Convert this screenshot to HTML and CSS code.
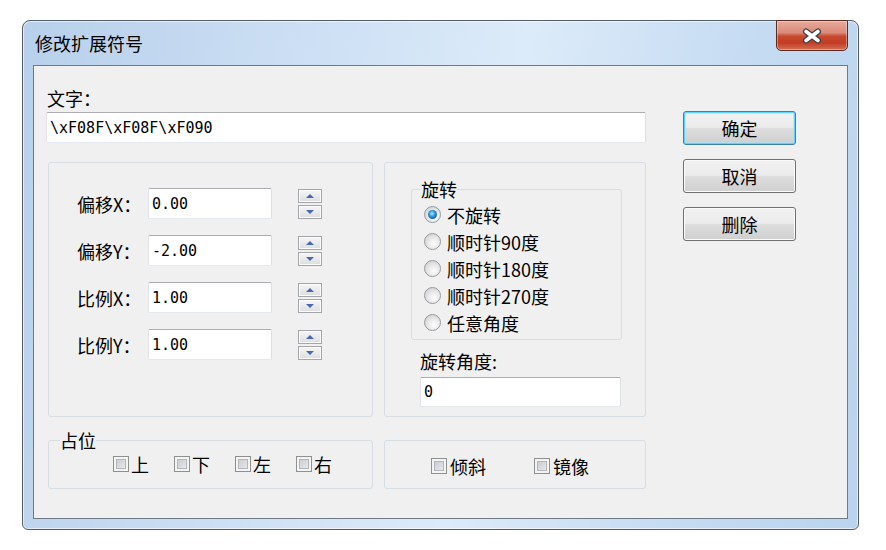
FILE: index.html
```html
<!DOCTYPE html>
<html lang="zh-CN">
<head>
    <meta charset="UTF-8">
    <title>修改扩展符号</title>
    <link rel="stylesheet" href="styles.css">
</head>
<body>
    <div class="window">
        <div class="titlebar">
            <span class="title">修改扩展符号</span>
            <button class="close-btn" type="button">
                <svg width="22" height="16" viewBox="0 0 22 16">
                    <path d="M5 3.5 L17 12.5 M17 3.5 L5 12.5" stroke="#3b4148" stroke-width="6" stroke-linecap="round"/>
                    <path d="M5 3.5 L17 12.5 M17 3.5 L5 12.5" stroke="#ffffff" stroke-width="3.6" stroke-linecap="round"/>
                </svg>
            </button>
        </div>
        <div class="client">
            <div class="main">
                <div class="text-label">文字：</div>
                <input class="field field-wide" type="text" value="\xF08F\xF08F\xF090">

                <div class="groups">
                    <div class="group offsets">
                        <label>偏移X：</label>
                        <input class="field field-num" type="text" value="0.00">
                        <div class="spin"><span class="spin-up"></span><span class="spin-down"></span></div>

                        <label>偏移Y：</label>
                        <input class="field field-num" type="text" value="-2.00">
                        <div class="spin"><span class="spin-up"></span><span class="spin-down"></span></div>

                        <label>比例X：</label>
                        <input class="field field-num" type="text" value="1.00">
                        <div class="spin"><span class="spin-up"></span><span class="spin-down"></span></div>

                        <label>比例Y：</label>
                        <input class="field field-num" type="text" value="1.00">
                        <div class="spin"><span class="spin-up"></span><span class="spin-down"></span></div>
                    </div>

                    <div class="group rotation">
                        <fieldset class="rotate-set">
                            <legend>旋转</legend>
                            <div class="radio-row"><span class="radio checked"></span>不旋转</div>
                            <div class="radio-row"><span class="radio"></span>顺时针90度</div>
                            <div class="radio-row"><span class="radio"></span>顺时针180度</div>
                            <div class="radio-row"><span class="radio"></span>顺时针270度</div>
                            <div class="radio-row"><span class="radio"></span>任意角度</div>
                        </fieldset>
                        <div class="angle-label">旋转角度:</div>
                        <input class="field field-angle" type="text" value="0">
                    </div>
                </div>

                <div class="groups bottom">
                    <fieldset class="group place">
                        <legend>占位</legend>
                        <div class="check-row">
                            <span class="check"><span class="box"></span>上</span>
                            <span class="check"><span class="box"></span>下</span>
                            <span class="check"><span class="box"></span>左</span>
                            <span class="check"><span class="box"></span>右</span>
                        </div>
                    </fieldset>
                    <div class="group flags">
                        <div class="check-row">
                            <span class="check"><span class="box"></span>倾斜</span>
                            <span class="check"><span class="box"></span>镜像</span>
                        </div>
                    </div>
                </div>
            </div>

            <div class="buttons">
                <button class="btn default" type="button">确定</button>
                <button class="btn" type="button">取消</button>
                <button class="btn" type="button">删除</button>
            </div>
        </div>
    </div>
</body>
</html>
```

FILE: styles.css
```css
body {
    margin: 0;
    background: #fff;
    font-family: "Noto Sans CJK SC", sans-serif;
    font-size: 18px;
    line-height: 18px;
    color: #000;
}

.window {
    box-sizing: border-box;
    width: 837px;
    height: 510px;
    margin: 20px 0 0 22px;
    padding: 0 10px 10px;
    border: 1px solid #555b62;
    border-radius: 8px 8px 6px 6px;
    background: linear-gradient(100deg, #b8d0eb 0%, #cfe1f5 35%, #dcebf9 55%, #c5dbf2 80%, #bad3ee 100%);
    box-shadow: inset 0 0 0 1px rgba(255, 255, 255, 0.6);
    display: flex;
    flex-direction: column;
}

.titlebar {
    height: 44px;
    display: flex;
    align-items: center;
    justify-content: space-between;
    padding-left: 2px;
    flex-shrink: 0;
}

.close-btn {
    align-self: flex-start;
    margin-top: -1px;
    width: 72px;
    height: 31px;
    padding: 0;
    border: 1px solid #5d2a22;
    border-radius: 0 0 5px 5px;
    background: linear-gradient(#e6aa9c 0%, #db8b7a 40%, #c84a30 52%, #c23c22 75%, #d27157 100%);
    box-shadow: inset 0 0 0 1px rgba(255, 255, 255, 0.35);
    display: flex;
    align-items: center;
    justify-content: center;
}

.client {
    flex: 1;
    display: flex;
    gap: 37px;
    background: #f0f0f0;
    border: 1px solid #6e7a86;
    padding: 23px 0 0 12px;
}

.main {
    width: 600px;
    display: flex;
    flex-direction: column;
}

.text-label {
    padding-left: 1px;
}

.field {
    box-sizing: border-box;
    margin: 0;
    padding: 0 3px;
    border: 1px solid;
    border-color: #abadb3 #dbdfe6 #e3e9ef #e2e3ea;
    border-radius: 2px;
    background: #fff;
    color: #000;
    font-family: "DejaVu Sans Mono", monospace;
    font-size: 15px;
    outline: none;
}

.field-wide {
    width: 600px;
    height: 31px;
    margin-top: 5px;
}

.groups {
    display: grid;
    grid-template-columns: 325px 262px;
    column-gap: 11px;
    margin: 19px 0 0 2px;
}

.group {
    box-sizing: border-box;
    margin: 0;
    border: 1px solid #d5dde5;
    border-radius: 3px;
    min-width: 0;
}

.offsets {
    height: 255px;
    display: grid;
    grid-template-columns: 71px 124px 50px;
    grid-auto-rows: 31px;
    row-gap: 16px;
    align-items: center;
    align-content: start;
    padding: 25px 0 0 28px;
}

.field-num {
    width: 124px;
    height: 31px;
}

.spin {
    margin-left: 26px;
    display: flex;
    flex-direction: column;
    gap: 2px;
}

.spin span {
    box-sizing: border-box;
    width: 24px;
    height: 14px;
    border: 1px solid #a3a5a9;
    background: linear-gradient(#f6f6f6, #dcdde0);
    box-shadow: inset 0 0 0 1px #fbfbfb;
    display: flex;
    align-items: center;
    justify-content: center;
}

.spin-up::after,
.spin-down::after {
    content: "";
    border-left: 4px solid transparent;
    border-right: 4px solid transparent;
}

.spin-up::after {
    border-bottom: 4px solid #4a68b0;
}

.spin-down::after {
    border-top: 4px solid #4a68b0;
}

.rotation {
    height: 255px;
    padding: 17px 0 0 26px;
}

.rotate-set {
    box-sizing: border-box;
    width: 211px;
    margin: 0;
    padding: 3px 0 3px 12px;
    border: 1px solid #d5dde5;
    border-radius: 3px;
    min-width: 0;
}

legend {
    padding: 0;
    line-height: 18px;
}

.rotate-set legend {
    margin-left: -3px;
}

.radio-row {
    height: 27px;
    display: flex;
    align-items: center;
    gap: 6px;
}

.radio {
    box-sizing: border-box;
    width: 17px;
    height: 17px;
    border: 1px solid #959aa0;
    border-radius: 50%;
    background: radial-gradient(circle at 60% 65%, #fdfdfd 0%, #e8e8e8 45%, #c6c6c6 100%);
    display: flex;
    align-items: center;
    justify-content: center;
}

.radio.checked::after {
    content: "";
    width: 9px;
    height: 9px;
    border-radius: 50%;
    background: radial-gradient(circle at 45% 40%, #b8ecff 0%, #36a0e6 35%, #125a9c 75%, #0c3f70 100%);
}

.angle-label {
    margin: 12px 0 0 9px;
}

.field-angle {
    width: 201px;
    height: 30px;
    margin: 7px 0 0 9px;
}

.bottom {
    margin-top: 14px;
    align-items: end;
}

.place {
    padding: 6px 0 15px 0;
}

.place legend {
    margin-left: 11px;
}

.place .check-row {
    margin-left: 64px;
    gap: 25px;
}

.flags {
    height: 49px;
    padding: 16px 0 0 46px;
}

.flags .check-row {
    gap: 48px;
}

.flags .check {
    gap: 3px;
}

.check-row {
    display: flex;
    height: 18px;
}

.check {
    display: inline-flex;
    align-items: center;
    gap: 2px;
}

.box {
    box-sizing: border-box;
    width: 16px;
    height: 16px;
    border: 1px solid #8e8f8f;
    background: linear-gradient(135deg, #c0c4ca, #f0f1f2);
    box-shadow: inset 0 0 0 2px #f4f4f4, inset 0 0 0 3px #b2b6bc;
}

.buttons {
    margin-top: 22px;
    display: flex;
    flex-direction: column;
    gap: 14px;
}

.btn {
    box-sizing: border-box;
    width: 113px;
    height: 34px;
    padding: 0;
    border: 1px solid #707070;
    border-radius: 3px;
    background: linear-gradient(#f2f2f2 0%, #ebebeb 48%, #dddddd 52%, #cfcfcf 100%);
    box-shadow: inset 0 0 0 1px #fbfbfb;
    color: #000;
    font-family: "Noto Sans CJK SC", sans-serif;
    font-size: 18px;
    line-height: 18px;
}

.btn.default {
    border-color: #3c7fb1;
    box-shadow: inset 0 0 0 1px #5ed6fb, inset 0 0 0 2px rgba(160, 230, 255, 0.6);
}
```
